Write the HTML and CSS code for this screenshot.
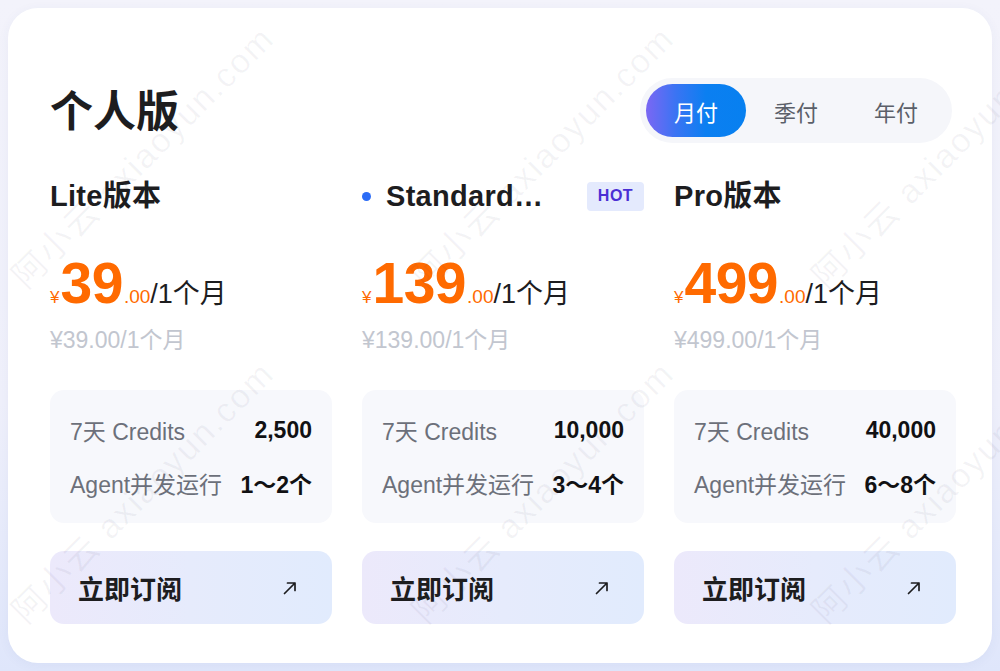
FILE: index.html
```html
<!DOCTYPE html>
<html lang="zh-CN">
<head>
<meta charset="utf-8">
<title>个人版</title>
<link rel="stylesheet" href="styles.css">
</head>
<body>
<div class="card">
  <div class="header">
    <h1 class="title">个人版</h1>
    <div class="toggle">
      <span class="toggle-item active">月付</span>
      <span class="toggle-item">季付</span>
      <span class="toggle-item">年付</span>
    </div>
  </div>

  <div class="plans">
    <div class="plan">
      <div class="plan-head">
        <span class="plan-name">Lite版本</span>
      </div>
      <div class="price"><span class="cur">¥</span><span class="amount">39</span><span class="cents">.00</span><span class="per">/1个月</span></div>
      <div class="orig">¥39.00/1个月</div>
      <div class="features">
        <div class="feat-row"><span class="feat-label">7天 Credits</span><span class="feat-value">2,500</span></div>
        <div class="feat-row"><span class="feat-label">Agent并发运行</span><span class="feat-value">1～2个</span></div>
      </div>
      <a class="btn" href="#"><span class="btn-text">立即订阅</span><svg class="btn-arrow" viewBox="0 0 16 16" width="16" height="16"><path d="M2.5 13.5 L13 3 M5.5 3 H13 V10.5" fill="none" stroke="#1d1d1f" stroke-width="1.7" stroke-linecap="round" stroke-linejoin="round"/></svg></a>
    </div>

    <div class="plan">
      <div class="plan-head">
        <span class="dot"></span>
        <span class="plan-name plan-name-trunc">Standard版本</span>
        <span class="hot">HOT</span>
      </div>
      <div class="price"><span class="cur">¥</span><span class="amount">139</span><span class="cents">.00</span><span class="per">/1个月</span></div>
      <div class="orig">¥139.00/1个月</div>
      <div class="features">
        <div class="feat-row"><span class="feat-label">7天 Credits</span><span class="feat-value">10,000</span></div>
        <div class="feat-row"><span class="feat-label">Agent并发运行</span><span class="feat-value">3～4个</span></div>
      </div>
      <a class="btn" href="#"><span class="btn-text">立即订阅</span><svg class="btn-arrow" viewBox="0 0 16 16" width="16" height="16"><path d="M2.5 13.5 L13 3 M5.5 3 H13 V10.5" fill="none" stroke="#1d1d1f" stroke-width="1.7" stroke-linecap="round" stroke-linejoin="round"/></svg></a>
    </div>

    <div class="plan">
      <div class="plan-head">
        <span class="plan-name">Pro版本</span>
      </div>
      <div class="price"><span class="cur">¥</span><span class="amount">499</span><span class="cents">.00</span><span class="per">/1个月</span></div>
      <div class="orig">¥499.00/1个月</div>
      <div class="features">
        <div class="feat-row"><span class="feat-label">7天 Credits</span><span class="feat-value">40,000</span></div>
        <div class="feat-row"><span class="feat-label">Agent并发运行</span><span class="feat-value">6～8个</span></div>
      </div>
      <a class="btn" href="#"><span class="btn-text">立即订阅</span><svg class="btn-arrow" viewBox="0 0 16 16" width="16" height="16"><path d="M2.5 13.5 L13 3 M5.5 3 H13 V10.5" fill="none" stroke="#1d1d1f" stroke-width="1.7" stroke-linecap="round" stroke-linejoin="round"/></svg></a>
    </div>
  </div>
</div>

<div class="watermarks" aria-hidden="true">
  <span class="wm wm-1">阿小云 axiaoyun.com</span>
  <span class="wm wm-2">阿小云 axiaoyun.com</span>
  <span class="wm wm-3">阿小云 axiaoyun.com</span>
  <span class="wm wm-4">阿小云 axiaoyun.com</span>
  <span class="wm wm-5">阿小云 axiaoyun.com</span>
  <span class="wm wm-6">阿小云 axiaoyun.com</span>
</div>
</body>
</html>
```

FILE: styles.css
```css
* { box-sizing: border-box; }

html, body {
  margin: 0;
  padding: 0;
}

body {
  width: 1000px;
  height: 671px;
  overflow: hidden;
  position: relative;
  font-family: "Liberation Sans", "Noto Sans CJK SC", sans-serif;
  color: #1d1d1f;
  background: linear-gradient(180deg, #f3f3fb 0%, #eff0fb 60%, #dfe6fb 100%);
  padding: 8px 8px 0 8px;
}

.card {
  width: 984px;
  background: #ffffff;
  border-radius: 30px;
  padding: 70px 36px 39px 42px;
  box-shadow: 0 2px 12px rgba(60, 70, 140, 0.05);
}

.header {
  display: flex;
  justify-content: space-between;
  align-items: center;
  height: 65px;
  padding-right: 4px;
}

.title {
  margin: 0 0 4px 0;
  font-family: "Noto Sans CJK SC", sans-serif;
  font-size: 43px;
  font-weight: 700;
  line-height: 1;
  color: #1d1d1f;
}

.toggle {
  display: flex;
  padding: 6px;
  height: 65px;
  background: #f5f6fa;
  border-radius: 33px;
}

.toggle-item {
  width: 100px;
  display: flex;
  align-items: center;
  justify-content: center;
  border-radius: 27px;
  font-family: "Noto Sans CJK SC", sans-serif;
  font-size: 22px;
  color: #5b5f69;
}

.toggle-item.active {
  color: #ffffff;
  background: linear-gradient(90deg, #7b67f3 0%, #3a74f3 30%, #0b7ff1 60%, #0780f0 100%);
}

.plans {
  display: grid;
  grid-template-columns: repeat(3, 282px);
  column-gap: 30px;
  margin-top: 35px;
}

.plan {
  display: flex;
  flex-direction: column;
}

.plan-head {
  display: flex;
  align-items: center;
  height: 36px;
}

.plan-name {
  font-size: 29px;
  font-weight: 700;
  line-height: 36px;
  letter-spacing: 0.3px;
  color: #1d1d1f;
  white-space: nowrap;
}

.plan-name-trunc {
  max-width: 170px;
  overflow: hidden;
  text-overflow: ellipsis;
}

.dot {
  width: 9px;
  height: 9px;
  border-radius: 50%;
  background: #2b6cf6;
  margin: 0 15px 0 0;
}

.hot {
  margin-left: auto;
  width: 57px;
  height: 29px;
  display: flex;
  align-items: center;
  justify-content: center;
  background: #e4eafd;
  border-radius: 4px;
  color: #4a2fd4;
  font-size: 16px;
  font-weight: 700;
  letter-spacing: 0.5px;
}

.price {
  margin-top: 37px;
  font-size: 57px;
  line-height: 64px;
  white-space: nowrap;
  color: #ff6a00;
}

.price .cur {
  font-size: 17px;
  line-height: 1;
  margin-right: 1px;
}

.price .amount {
  font-weight: 700;
  letter-spacing: -0.5px;
}

.price .cents {
  font-size: 19px;
  line-height: 1;
  margin-left: 1px;
}

.price .per {
  font-size: 27px;
  line-height: 1;
  color: #1d1d1f;
}

.orig {
  margin-top: 10px;
  font-size: 23px;
  line-height: 30px;
  color: #c2c6cf;
}

.features {
  margin-top: 35px;
  background: #f7f8fc;
  border-radius: 14px;
  padding: 24px 20px;
  display: flex;
  flex-direction: column;
  gap: 21px;
}

.feat-row {
  display: flex;
  justify-content: space-between;
  align-items: center;
  height: 32px;
}

.feat-label {
  font-size: 23px;
  color: #6c707a;
}

.feat-value {
  font-size: 23px;
  font-weight: 700;
  color: #111113;
}

.btn {
  margin-top: 28px;
  height: 73px;
  border-radius: 14px;
  display: flex;
  align-items: center;
  justify-content: space-between;
  padding: 0 34px 0 28px;
  text-decoration: none;
  background: linear-gradient(90deg, #ece9fb 0%, #e6ebfc 50%, #e1ebfd 100%);
}

.btn-text {
  font-family: "Noto Sans CJK SC", sans-serif;
  font-size: 26px;
  font-weight: 700;
  color: #1d1d1f;
}

.btn-arrow {
  display: block;
}

.watermarks {
  position: absolute;
  inset: 0;
  pointer-events: none;
  overflow: hidden;
}

.wm {
  position: absolute;
  font-family: "Liberation Sans", "Noto Sans CJK SC", sans-serif;
  font-size: 34px;
  line-height: 40px;
  letter-spacing: 2px;
  white-space: nowrap;
  color: rgba(70, 70, 100, 0.06);
  transform-origin: left bottom;
  transform: rotate(-45deg);
}

.wm-1 { left: 32px; top: 256px; }
.wm-2 { left: 432px; top: 256px; }
.wm-3 { left: 832px; top: 256px; }
.wm-4 { left: 32px; top: 591px; }
.wm-5 { left: 432px; top: 591px; }
.wm-6 { left: 832px; top: 591px; }
```
